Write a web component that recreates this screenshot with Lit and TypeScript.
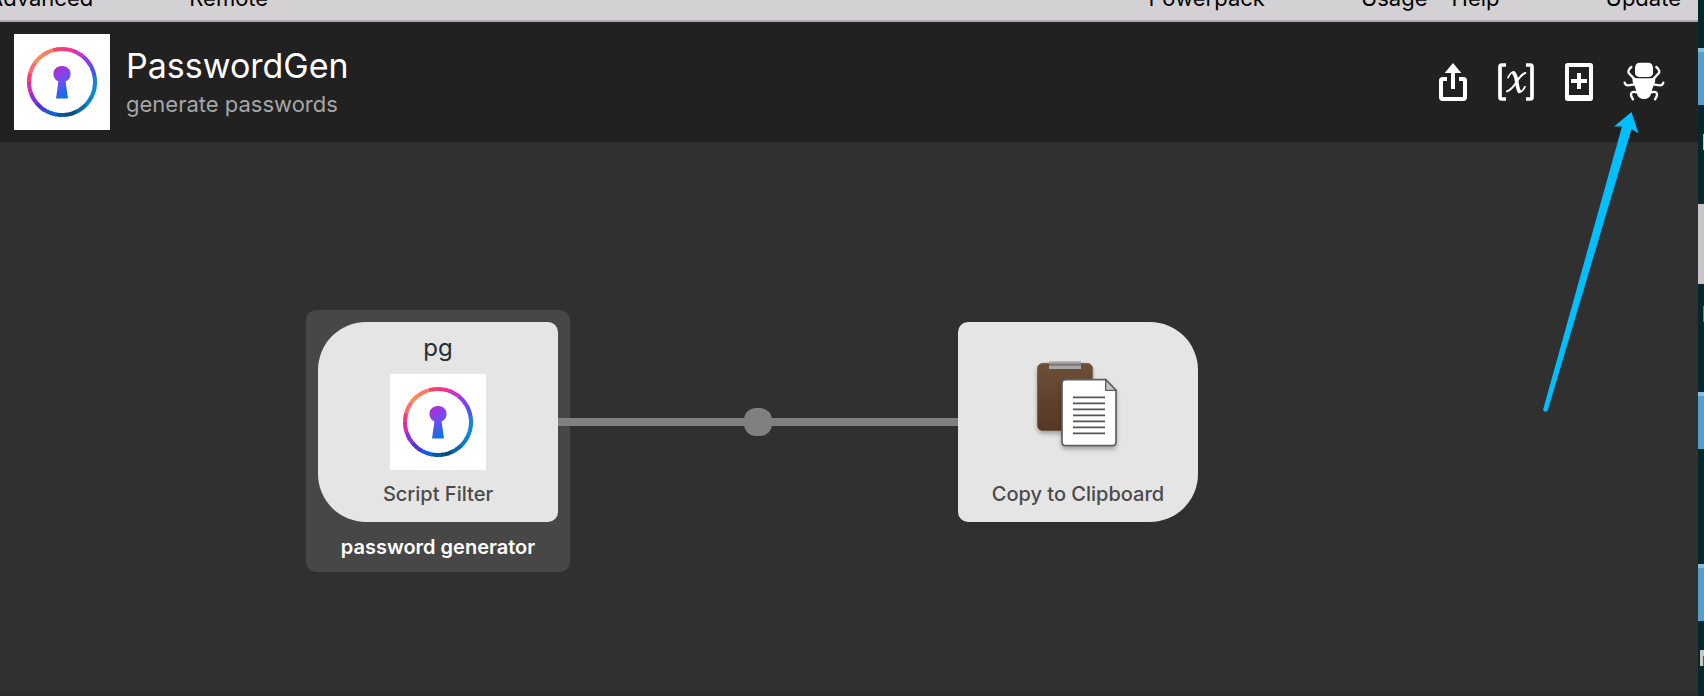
import { LitElement, html, svg, css } from "lit";
import { customElement, property } from "lit/decorators.js";

@customElement("keyhole-logo")
class KeyholeLogo extends LitElement {
  static styles = css`
    :host { display: block; width: 96px; height: 96px; background: #fff; }
    .art { display: block; }
    .ring { fill: none; }
  `;
  render() {
    const stops = ["#f0358a", "#c837c8", "#8a3df0", "#4a55f0", "#1a80e0", "#0a8ad8", "#0a80c8", "#0a6aa8", "#085080", "#0a5aa0", "#1060e0", "#4a38d8", "#8a30d8", "#d030b0", "#ff3878", "#ff6a70", "#ff8858", "#ff7a60", "#f84070"];
    const n = 72;
    const segs = Array.from({ length: n }, (_, i) => {
      const a = (i / n) * 2 * Math.PI;
      const b = ((i + 1.3) / n) * 2 * Math.PI;
      const p = (t: number) => `${48 + 33 * Math.sin(t)} ${48 - 33 * Math.cos(t)}`;
      const color = stops[Math.floor((i / n) * stops.length)];
      return svg`<path class="ring" d="M${p(a)}A33 33 0 0 1 ${p(b)}" stroke=${color} stroke-width="4"/>`;
    });
    return html`<svg class="art" width="96" height="96" viewBox="0 0 96 96" aria-hidden="true">
      <defs><linearGradient id="k" x1="0" y1="0" x2=".4" y2="1">
        <stop offset="0" stop-color="#c026c8"/><stop offset=".5" stop-color="#7a48f0"/><stop offset="1" stop-color="#1070e8"/>
      </linearGradient></defs>
      ${segs}
      <path fill="url(#k)" d="M48 32a8 8 0 0 1 3.6 15.4L54 64.500H42l2.400-17.100A8 8 0 0 1 48 32z"/>
    </svg>`;
  }
}

@customElement("flow-node")
class FlowNode extends LitElement {
  @property() label = "";
  @property() keyword = "";
  @property() side = "left";
  static styles = css`
    :host { display: block; }
    .card {
      box-sizing: border-box; width: 240px; height: 200px;
      display: flex; flex-direction: column; align-items: center; justify-content: flex-end;
      gap: 10px; padding: 10px 0 14px; background: #e5e5e5; color: #4a4a4a;
    }
    .left { border-radius: 48px 10px 10px 48px; }
    .right { border-radius: 10px 48px 48px 10px; }
    .keyword { font-size: 24px; line-height: 32px; color: #2c2c2c; }
    .label { font-size: 20px; line-height: 28px; font-weight: 500; }
  `;
  render() {
    return html`<div class="card ${this.side}">
      ${this.keyword ? html`<div class="keyword">${this.keyword}</div>` : ""}
      <slot></slot>
      <div class="label">${this.label}</div>
    </div>`;
  }
}

@customElement("app-root")
class AppRoot extends LitElement {
  static styles = css`
    :host {
      display: flex; height: 100vh; overflow: hidden;
      font-family: Inter, "Liberation Sans", sans-serif; background: #03272c;
    }
    .window { flex: 1; min-width: 0; display: flex; flex-direction: column; position: relative; background: #303030; }
    .tabs {
      box-sizing: border-box; height: 22px; overflow: hidden; flex: none;
      display: flex; align-items: flex-end; justify-content: space-between;
      padding: 0 17px 10px 0; border-bottom: 2px solid #aaa8aa; background: #d4d1d4;
    }
    .group { display: flex; gap: 96px; }
    .pair { display: flex; gap: 24px; margin-right: 10px; }
    .start { margin-left: -12px; }
    .tab { color: #000; text-decoration: none; font-size: 22px; line-height: 24px; }
    .head {
      box-sizing: border-box; height: 120px; flex: none; display: flex; align-items: center;
      gap: 16px; padding: 0 34px 0 14px; background: #212121;
    }
    .titles { flex: 1; }
    .title { margin: 0; font-size: 34px; line-height: 44px; font-weight: 400; color: #fff; }
    .sub { margin: 0; font-size: 22px; line-height: 32px; color: #a6a6a6; }
    .actions { display: flex; align-items: center; gap: 31px; }
    .action { display: block; padding: 0; border: 0; background: none; color: #fff; }
    .action svg { display: block; }
    .canvas { flex: 1; position: relative; border-bottom: 3px solid #2c2c2c; }
    .selected {
      position: absolute; left: 306px; top: 168px; padding: 12px; border-radius: 10px;
      background: #474747; display: flex; flex-direction: column; gap: 12px;
    }
    .note { font-size: 20px; line-height: 26px; font-weight: 600; text-align: center; color: #fff; }
    .copy { position: absolute; left: 958px; top: 180px; }
    .link { position: absolute; left: 558px; top: 276px; width: 400px; height: 8px; background: #808080; }
    .knob { position: absolute; left: 186px; top: -10px; width: 28px; height: 28px; border-radius: 12px; background: #808080; }
    .pointer { position: absolute; right: 56px; top: 110px; pointer-events: none; }
    .desk { width: 6px; flex: none; }
    .desk svg { display: block; }
  `;
  render() {
    return html`
      <div class="window">
        <nav class="tabs">
          <div class="group start"><a class="tab" href="#advanced">Advanced</a><a class="tab" href="#remote">Remote</a></div>
          <div class="group"><a class="tab" href="#powerpack">Powerpack</a>
            <div class="pair"><a class="tab" href="#usage">Usage</a><a class="tab" href="#help">Help</a></div>
            <a class="tab" href="#update">Update</a></div>
        </nav>
        <header class="head">
          <keyhole-logo></keyhole-logo>
          <div class="titles"><h1 class="title">PasswordGen</h1><p class="sub">generate passwords</p></div>
          <div class="actions">
            <button class="action" aria-label="Share"><svg width="28" height="38" viewBox="54 39 84 114">
              <path fill="none" stroke="currentColor" stroke-width="12" d="M78 87H65Q60 87 60 92V142Q60 147 65 147H127Q132 147 132 142V92Q132 87 127 87H114"/>
              <path fill="currentColor" d="M96 39L121 69H102V117H90V69H71z"/></svg></button>
            <button class="action" aria-label="Variables"><svg width="36" height="38" viewBox="234 39 108 114">
              <path fill="none" stroke="currentColor" stroke-width="11" d="M258 45H245Q240 45 240 50V142Q240 147 245 147H258M318 45H331Q336 45 336 50V142Q336 147 331 147H318"/>
              <g fill="none" stroke="currentColor" stroke-linecap="round">
                <path stroke-width="11" d="M281 69Q287 74 290 94Q293 117 298 124"/>
                <path stroke-width="5" d="M264 83Q272 66 281 66M298 126Q307 127 315 110"/>
                <path stroke-width="6" d="M316 69Q304 73 290 95Q275 119 261 124"/>
              </g></svg></button>
            <button class="action" aria-label="Add object"><svg width="28" height="38" viewBox="438 39 84 114">
              <path fill="currentColor" fill-rule="evenodd" d="M446 39H514Q522 39 522 47V145Q522 153 514 153H446Q438 153 438 145V47Q438 39 446 39zM450 51V135H510V51z"/>
              <path fill="currentColor" d="M474 69H486V87H504V99H486V117H474V99H456V87H474z"/></svg></button>
            <button class="action" aria-label="Debug"><svg width="40" height="38" viewBox="612 38 120 114" overflow="visible">
              <path fill="currentColor" d="M657 37H687Q698 38 699 53V69Q698 79 687 80H657Q646 79 645 69V53Q646 38 657 37zM637 82Q672 86 706 82Q707 97 700 108Q696 118 694 127Q690 146 672 146Q654 146 650 127Q648 118 644 108Q636 97 637 82z"/>
              <path fill="none" stroke="currentColor" stroke-width="7" stroke-linecap="round" stroke-linejoin="round" d="M634 50Q619 63 629 71L642 85M709 50Q724 63 714 71L701 85M614 97Q617 106 625 105L644 102M730 97Q727 106 719 105L700 102M651 126Q629 120 634 138L639 147M693 126Q715 120 710 138L705 147"/></svg></button>
          </div>
        </header>
        <main class="canvas">
          <div class="selected">
            <flow-node keyword="pg" label="Script Filter" side="left"><keyhole-logo></keyhole-logo></flow-node>
            <div class="note">password generator</div>
          </div>
          <flow-node class="copy" label="Copy to Clipboard" side="right">
            <svg width="96" height="124" viewBox="240 108 288 372" overflow="visible" aria-hidden="true">
              <defs>
                <linearGradient id="b" x1="0" y1="0" x2="0" y2="1"><stop stop-color="#6d5038"/><stop offset="1" stop-color="#573623"/></linearGradient>
                <filter id="s" x="-20%" y="-20%" width="140%" height="150%"><feDropShadow dx="0" dy="9" stdDeviation="7" flood-opacity=".28"/></filter>
              </defs>
              <rect x="262" y="160" width="166" height="202" rx="16" fill="url(#b)" stroke="#775a44" stroke-width="2" filter="url(#s)"/>
              <path fill="#a7a5a5" d="M297 154H393V177H297z"/><path fill="#777474" d="M297 161H393V167H297z"/>
              <path fill="#fff" stroke="#5e5e5e" stroke-width="5" filter="url(#s)" d="M348 209H467L498 241V395Q498 407 486 407H348Q336 407 336 395V221Q336 209 348 209z"/>
              <path fill="#c2c6c7" stroke="#5e5e5e" stroke-width="4" d="M467 209V241H498z"/>
              <path stroke="#555" stroke-width="5" d="M369 262H465M369 280H465M369 298H465M369 316H465M369 334H465M369 352H465M369 370H465"/>
            </svg>
          </flow-node>
          <div class="link"><div class="knob"></div></div>
        </main>
        <svg class="pointer" width="104" height="304" viewBox="1538 110 104 304" aria-hidden="true">
          <path fill="#00bfff" d="M1631.500 112L1638.500 133.500L1631.500 129L1547.500 411Q1545 413 1543 410L1622 126.500L1614 126.500z"/>
        </svg>
      </div>
      <div class="desk" aria-hidden="true">
        <svg width="6" height="696" viewBox="0 0 6 696">
          <path fill="#55a0cb" d="M0 48H6V105H0zM0 392H6V449H0zM0 564H6V621H0z"/>
          <path fill="#88bdd8" d="M0 48H6V52H0zM0 392H6V396H0zM0 564H6V568H0z"/>
          <path fill="#c8c5c8" d="M0 204H6V284H0zM5 134H6V150H5zM2 650H6V666H2z"/>
          <path fill="#667c80" d="M5 306H6V322H5z"/><path fill="#555" d="M5 656H6V666H5z"/>
        </svg>
      </div>`;
  }
}
